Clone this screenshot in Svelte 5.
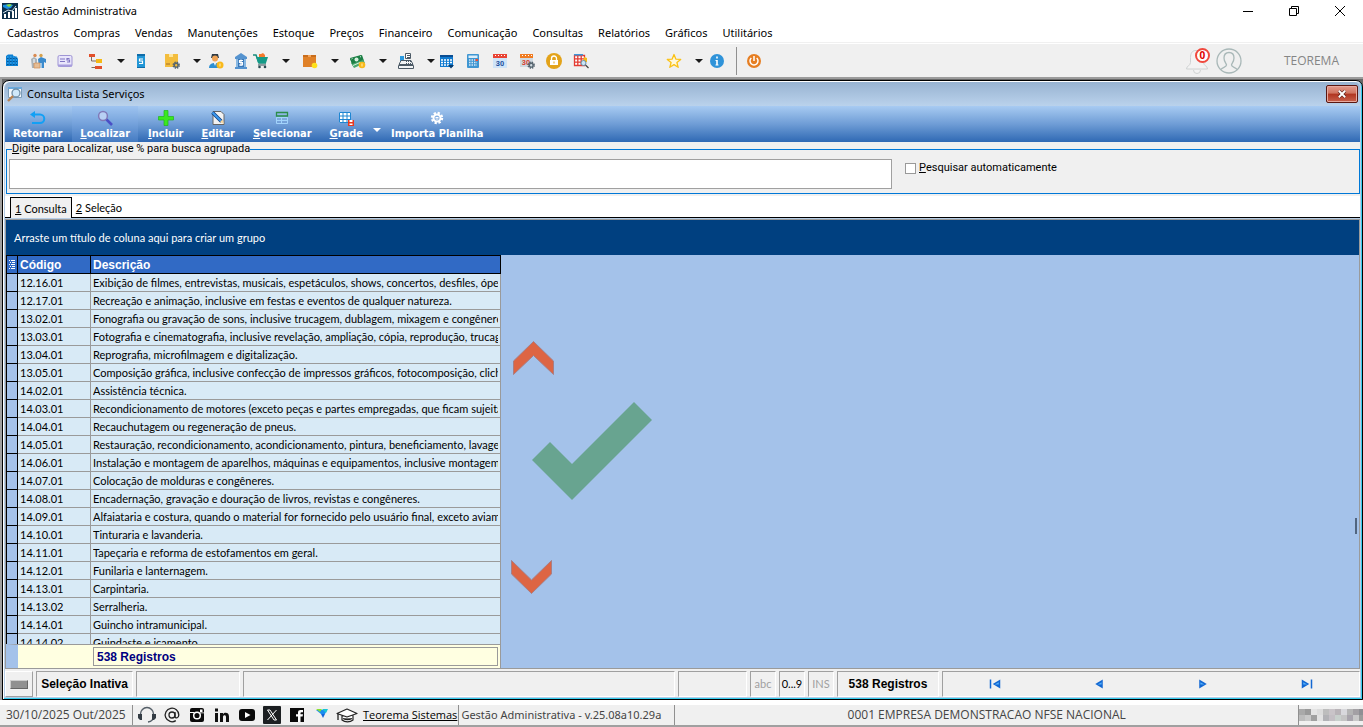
<script lang="ts">
  const menus = [
    "Cadastros",
    "Compras",
    "Vendas",
    "Manutenções",
    "Estoque",
    "Preços",
    "Financeiro",
    "Comunicação",
    "Consultas",
    "Relatórios",
    "Gráficos",
    "Utilitários",
  ];

  // main toolbar, width is the room each button takes
  const tools = [
    { icon: "building", label: "Empresas", width: 26, drop: false },
    { icon: "people", label: "Clientes", width: 27, drop: false },
    { icon: "card", label: "Cartões", width: 31, drop: false },
    { icon: "tree", label: "Plano de contas", width: 45, drop: true },
    { icon: "service", label: "Serviços", width: 31, drop: false },
    { icon: "boxGear", label: "Produtos", width: 44, drop: true },
    { icon: "userCoin", label: "Vendedores", width: 25, drop: false },
    { icon: "bank", label: "Bancos", width: 20, drop: false },
    { icon: "cart", label: "Pedidos", width: 49, drop: true },
    { icon: "box", label: "Estoque", width: 48, drop: true },
    { icon: "cash", label: "Contas", width: 48, drop: true },
    { icon: "register", label: "Caixa", width: 41, drop: true },
    { icon: "calendar", label: "Agenda", width: 26, drop: false },
    { icon: "calculator", label: "Calculadora", width: 27, drop: false },
    { icon: "day", label: "Data", width: 27, drop: false },
    { icon: "dayGear", label: "Vencimentos", width: 27, drop: false },
    { icon: "lock", label: "Bloquear", width: 27, drop: false },
    { icon: "gridSearch", label: "Consultar", width: 27, drop: false },
  ];

  const actions = [
    { icon: "back", key: "", text: "Retornar" },
    { icon: "search", key: "L", text: "ocalizar" },
    { icon: "plus", key: "I", text: "ncluir" },
    { icon: "edit", key: "E", text: "ditar" },
    { icon: "select", key: "S", text: "elecionar" },
    { icon: "gridSave", key: "G", text: "rade" },
    { icon: "gear", key: "", text: "Importa Planilha" },
  ];

  const rows = [
    ["12.16.01", "Exibição de filmes, entrevistas, musicais, espetáculos, shows, concertos, desfiles, óperas"],
    ["12.17.01", "Recreação e animação, inclusive em festas e eventos de qualquer natureza."],
    ["13.02.01", "Fonografia ou gravação de sons, inclusive trucagem, dublagem, mixagem e congêneres."],
    ["13.03.01", "Fotografia e cinematografia, inclusive revelação, ampliação, cópia, reprodução, trucagem"],
    ["13.04.01", "Reprografia, microfilmagem e digitalização."],
    ["13.05.01", "Composição gráfica, inclusive confecção de impressos gráficos, fotocomposição, clicheria"],
    ["14.02.01", "Assistência técnica."],
    ["14.03.01", "Recondicionamento de motores (exceto peças e partes empregadas, que ficam sujeitas"],
    ["14.04.01", "Recauchutagem ou regeneração de pneus."],
    ["14.05.01", "Restauração, recondicionamento, acondicionamento, pintura, beneficiamento, lavagem"],
    ["14.06.01", "Instalação e montagem de aparelhos, máquinas e equipamentos, inclusive montagem"],
    ["14.07.01", "Colocação de molduras e congêneres."],
    ["14.08.01", "Encadernação, gravação e douração de livros, revistas e congêneres."],
    ["14.09.01", "Alfaiataria e costura, quando o material for fornecido pelo usuário final, exceto aviamento."],
    ["14.10.01", "Tinturaria e lavanderia."],
    ["14.11.01", "Tapeçaria e reforma de estofamentos em geral."],
    ["14.12.01", "Funilaria e lanternagem."],
    ["14.13.01", "Carpintaria."],
    ["14.13.02", "Serralheria."],
    ["14.14.01", "Guincho intramunicipal."],
    ["14.14.02", "Guindaste e içamento."],
  ];

  const navs = [
    { icon: "first", label: "Primeiro" },
    { icon: "prev", label: "Anterior" },
    { icon: "next", label: "Próximo" },
    { icon: "last", label: "Último" },
  ];

  const links = [
    { icon: "headset", label: "Suporte" },
    { icon: "mail", label: "E-mail" },
    { icon: "instagram", label: "Instagram" },
    { icon: "linkedin", label: "LinkedIn" },
    { icon: "youtube", label: "YouTube" },
    { icon: "x", label: "X" },
    { icon: "facebook", label: "Facebook" },
    { icon: "teorema", label: "Site" },
    { icon: "school", label: "Treinamento" },
  ];

  // greys of the masked user name, two lines of squares
  const mask = [
    ["#a9a9a9", "#9a9a9a", "#e4e4e4", "#dcdcdc", "#bdbdbd", "#c9c4c8", "#b9b4b8", "#d8d8dc", "#b4b4b4", "#a3a0a4", "#8f8f94"],
    ["#bcbcbc", "#c8c8c8", "#a0a0a0", "#e2e2e2", "#b2b2b6", "#c4bfc4", "#c8d0cc", "#c4c4c4", "#a8a4ac", "#c8c8c8", "#9c9c9c"],
  ];

  const gearTeeth =
    '<circle cx="8" cy="8" r="5" fill="none" stroke="#fff" stroke-width="2.4" stroke-dasharray="2.2 1.73"/><circle cx="8" cy="8" r="3.5" fill="none" stroke="#fff" stroke-width="2"/>';
  const smallGear =
    '<circle cx="12.2" cy="12.2" r="2.9" fill="none" stroke="#56656f" stroke-width="1.6" stroke-dasharray="1.4 .9"/><circle cx="12.2" cy="12.2" r="1.9" fill="none" stroke="#56656f" stroke-width="1.4"/>';

  const icons: Record<string, string> = {
    app: '<path fill="#0d2f4a" d="M0 0h16v16H0z"/><path fill="#1c8fe0" d="M1 2l6-1 4 1-2 3-4 1-4-2z"/><path fill="#8ddc3c" d="M4 2l4-1 2 1-3 2z"/><path fill="#fff" d="M2 11h2v4H2zM6 9h2v6H6zM10 8h2v7h-2zM13 5h2v10h-2z"/><path stroke="#d4e6f2" fill="none" d="M1 10l5-3 4 1 4-5"/>',
    window: '<path fill="#f5fafe" stroke="#7c9cb8" d="M1.5 1.5h13v10h-13z"/><path fill="#6aa9dc" d="M1 1h14v2H1z"/><circle cx="9" cy="7" r="4" fill="#cfe8fa" stroke="#6f8da6" stroke-width="1.3"/><path stroke="#b98251" stroke-width="2.4" d="M6 10l-5 5"/>',
    building: '<path fill="#0b7fd2" d="M2 3l2-1.5h5v1l4 1.5 1 2v7H2z"/><path stroke="#075796" stroke-dasharray="1.5 1.5" d="M3 5.5h10M3 8.5h10M3 11.5h10"/><path stroke="#45aef0" stroke-dasharray="1.5 1.5" d="M3 4h10M3 7h10M3 10h10"/>',
    people: '<circle cx="5" cy="2.5" r="1.7" fill="#d98b52"/><path fill="#aab3ba" d="M1 6l3-2 3 2v9H2z"/><circle cx="11" cy="2.5" r="1.7" fill="#d7a14c"/><path fill="#3b8bcd" d="M8 6l3-2 5 2v4l-2-1v6H9z"/><path fill="#e5bd96" stroke="#cf8e55" stroke-width=".7" d="M4 10h6v5H4z"/><path stroke="#fff" d="M11 10v5M4 6v4"/>',
    card: '<rect x="1" y="2.5" width="14" height="11" rx="1.5" fill="#e9e6fb" stroke="#9f95d4"/><path fill="#a79ddd" d="M1 11.5h14v2H1z"/><path fill="none" stroke="#8075c3" stroke-width="1.2" d="M3 6h5M3 8.5h5M12.500 5.500H10v1.5h2.500v2H10"/>',
    tree: '<path fill="#e2502b" d="M1 1h6v3H1zM7 13h7v3H7z"/><path fill="#f5b915" d="M8 6h6v4H8z"/><path fill="none" stroke="#806a5c" d="M3.500 4v4H8M3.500 14.500H7"/>',
    service: '<path fill="#2196d6" d="M4 1h8v14H4z"/><path fill="#0f6ca8" d="M4 1h8v2H4zM4 14h8v1H4z"/><path fill="none" stroke="#fff" stroke-width="1.2" d="M10 6H6.500v2h3v2.500H6"/>',
    boxGear: '<path fill="#f3bd3d" d="M1 1h13v13H1z"/><path fill="#ffe59b" d="M5 1h4v3H5z"/><path stroke="#a06e2c" d="M2 11h4"/>' + smallGear,
    userCoin: '<path fill="#2e3a44" d="M4 1h6l1 4H3z"/><circle cx="7" cy="5.500" r="3" fill="#eea356"/><path fill="#2b8fd3" d="M1 15c0-4 3-5 6-5s5 1 6 5z"/><path fill="#fff" d="M6 10h2l-1 3z"/><circle cx="12" cy="12" r="3.500" fill="#f9b91b"/><path stroke="#fff2b8" d="M12 10.500v3"/>',
    bank: '<path fill="#5593cf" d="M8 0l6 4v2H2V4zM2 14h12v2H2z"/><path fill="#8ab9e3" d="M3 6h10v8H3z"/><path fill="#3777b9" d="M5 6h6v8H5z"/><path fill="none" stroke="#fff" stroke-width="1.2" d="M10 7.500H6.500v2h3v2.500H6M8 6.500v6.500"/>',
    cart: '<path fill="none" stroke="#178c7c" stroke-width="1.5" d="M0 2h3l3 8h7"/><path fill="#159b88" d="M3 4h12l-2 6H5z"/><path fill="#f47a2c" d="M6 1h2l2-1 2 2v2H6z"/><path fill="none" stroke="#2b4b52" d="M5 12h8"/><circle cx="6.500" cy="14" r="1.300" fill="#2b4b52"/><circle cx="12" cy="14" r="1.300" fill="#2b4b52"/>',
    box: '<path fill="#e08128" d="M1 2h13v12H1z"/><path fill="#c96d1c" d="M1 2h13v2H1z"/><path fill="#f6a65c" d="M6 2h3v2H6z"/><circle cx="12.500" cy="12.500" r="2.800" fill="#ffe01b"/>',
    cash: '<path fill="#1d8046" d="M0 6l12-4 2 6-11 5z"/><path fill="#4aa86f" d="M1 10l12-4 2 4-11 5z"/><path fill="#1d8046" d="M0 5l11-3 2 5-11 4z"/><circle cx="6.500" cy="6.500" r="2" fill="#d7f0df"/><path stroke="#d7f0df" d="M1.500 6l1-.5M10 4l1-.5M3 12.500l7-3"/><circle cx="12" cy="12" r="3.300" fill="#f9b91b"/><path stroke="#fff2b8" d="M12 10.500v3"/>',
    register: '<path fill="#fff" stroke="#4c5a66" d="M7.500.500h5v5h-5z"/><path stroke="#4c5a66" d="M9 2.500h3M9 4.500h3"/><path fill="#2b9ae0" d="M2 3h4v5H2z"/><path fill="#f3f5f6" stroke="#4c5a66" d="M3 7.500h10l2 4H1zM.500 12.500h15v3H.500z"/><path stroke="#4c5a66" stroke-dasharray="1 1" d="M8 8.500h5M8 10.500h6"/>',
    calendar: '<path fill="#0f7ad0" d="M1 2h13v12H1z"/><path stroke="#0a4d92" stroke-width="2" d="M1 3h13"/><path stroke="#fff" stroke-width="1.500" stroke-dasharray="2 1" d="M2 7h11M2 9.500h11M2 12h8"/><path fill="#063b6e" d="M9 12h6l-3 3.500z"/>',
    calculator: '<rect x="2" y="1" width="12" height="14" rx="1" fill="#3f96d2"/><path fill="#dceefa" d="M3.500 2.500h9v2.500h-9z"/><path stroke="#d3e8f6" stroke-width="1.500" stroke-dasharray="1.500 1" d="M4 7h8M4 9.500h8M4 12h8"/><path fill="#ee4b33" d="M10.500 6H13v2h-2.500z"/>',
    day: '<path fill="#cfe4f8" d="M1 2h14v13H1z"/><path fill="#e94435" d="M1 1h14v4H1z"/><path stroke="#fff" stroke-dasharray="1 2" d="M3 2.500h10"/><text x="8" y="12.500" text-anchor="middle" font-size="7.500" font-weight="bold" fill="#1b4f9c" font-family="Liberation Sans, sans-serif">30</text>',
    dayGear: '<path fill="#cfd9e0" d="M1 2h13v12H1z"/><path fill="#f07c22" d="M1 1h13v4H1z"/><path stroke="#fff" stroke-dasharray="1 2" d="M3 2.500h10"/><text x="7" y="12" text-anchor="middle" font-size="7.500" font-weight="bold" fill="#d9402c" font-family="Liberation Sans, sans-serif">30</text>' + smallGear,
    lock: '<circle cx="8" cy="8" r="8" fill="#e3a31a"/><path fill="#fff" d="M4 7h8v5H4z"/><path fill="none" stroke="#fff" stroke-width="1.300" d="M5.500 7V5.500a2.500 2.500 0 0 1 5 0V7"/><path fill="#e3a31a" d="M7.500 8.500h1v2h-1z"/>',
    gridSearch: '<path fill="#fff" stroke="#e33b32" stroke-width="1.300" d="M1.500 2.500h10v10h-10zM1.500 5.800h10M1.500 9.200h10M4.800 2.500v10M8.200 2.500v10"/><path fill="#3b97db" d="M1 1h9v1.500H1z"/><path fill="#f3b819" d="M11 4l3 1v4h-4z"/><circle cx="10.500" cy="10" r="2.500" fill="#c8e6fa" stroke="#6c8ca1"/><path stroke="#444" stroke-width="1.200" d="M12.500 12l3 3"/>',
    star: '<path fill="#fff8dc" stroke="#fbc216" stroke-width="1.300" stroke-linejoin="round" d="M8 1.500l1.800 4.600 4.900.3-3.800 3.100 1.300 4.800L8 11.600l-4.200 2.700 1.300-4.800L1.300 6.400l4.900-.3z"/>',
    info: '<circle cx="8" cy="8" r="7" fill="#2f93d9"/><path stroke="#fff" stroke-width="1.600" d="M8 7v5M8 3.500v2"/><path stroke="#fff" d="M6.500 12h3M6.500 7.500H8"/>',
    power: '<circle cx="8" cy="8" r="7" fill="#e67e22"/><path fill="none" stroke="#fff" stroke-width="1.500" d="M5.300 5a4 4 0 1 0 5.400 0M8 3v5"/>',
    back: '<path fill="none" stroke="#12a0f5" stroke-width="2" d="M2 4.500h8a4.200 4.200 0 0 1 0 8.500H2"/><path fill="#12a0f5" d="M5 1v7L0 4.500z"/>',
    search: '<circle cx="6" cy="6" r="4.400" fill="#b8d0f4" stroke="#8179b8" stroke-width="1.500"/><path stroke="#4a50c6" stroke-width="2.600" d="M9.500 9.500l5.500 5.500"/>',
    plus: '<path fill="#3be81f" stroke="#22b61d" stroke-width=".7" d="M6 .5h4V6.500h5.500v3.500H10v5.500H6V10H.500V6.500H6z"/>',
    edit: '<path fill="#f2f2f2" stroke="#666" d="M3 1.500h8l3 3v10H3z"/><path stroke="#123f80" stroke-width="3.600" d="M2.500 2.500l9 9"/><path stroke="#3b9af0" stroke-width="2" d="M2.500 2.500l8.500 8.500"/><path fill="#f7d59d" d="M10 12l2.500-2.500L14 14z"/>',
    select: '<path fill="none" stroke="#2a8d4a" stroke-width="1.300" d="M2.500 2.500h11v3.500h-11z"/><path fill="none" stroke="#a3d4fb" d="M2.500 7.500h11v6h-11zM7.500 7.500v6M2.500 10.500h11"/>',
    gridSave: '<path fill="#fff" d="M1 2h12v11H1z"/><path stroke="#1f86d2" fill="none" d="M1.500 2.500h11v10h-11zM5 2v11M9 2v11M1 6h12M1 9.500h12"/><path fill="#e8391f" d="M10 10h6v6h-6z"/><path fill="#fff" d="M11.500 10h3v2h-3zM11.500 13.500h3v1.500h-3z"/>',
    gear: gearTeeth + '<path stroke="#fff" stroke-width="1" d="M6.500 7.500h3M6.500 9h3"/>',
    first: '<path fill="#1267d2" d="M1 2h2v12H1zM15 2v12L5 8z"/><path fill="#55b0fb" d="M13 5.500v3H7.500z"/>',
    prev: '<path fill="#1267d2" d="M13 2v12L3 8z"/><path fill="#55b0fb" d="M11.500 5.500v3H6z"/>',
    next: '<path fill="#1267d2" d="M3 2v12l10-6z"/><path fill="#55b0fb" d="M4.500 5.500v3H10z"/>',
    last: '<path fill="#1267d2" d="M13 2h2v12h-2zM1 2v12l10-6z"/><path fill="#55b0fb" d="M3 5.500v3h5.500z"/>',
    headset: '<path fill="none" stroke="#555f68" stroke-width="1.400" d="M1.500 9V7a6.500 6.500 0 0 1 13 0v2c0 3-2 5.500-5.500 6"/><path fill="#333c44" d="M-1 7h4v6H1l-2-2zM13 7h4v4l-2 2h-2z"/>',
    mail: '<circle cx="8" cy="8" r="3" fill="none" stroke="#222" stroke-width="1.300"/><path fill="none" stroke="#222" stroke-width="1.300" d="M11 5v4.500c0 2 3.800 2 3.800-1.500a6.800 6.800 0 1 0-3 5.600"/>',
    instagram: '<rect x="1" y="1" width="14" height="14" rx="2" fill="#0a0a0a"/><circle cx="8" cy="8.500" r="3.300" fill="none" stroke="#fff" stroke-width="1.500"/><path fill="#fff" d="M11 2.500h2.500V5H11zM1 5h4v1H1zM11 5.500h4v.7h-4z"/>',
    linkedin: '<path fill="#111" d="M1 6h3v9H1zM1 1.500h3v3H1zM6 6h3v1.300C10.500 5 15 5.300 15 9.500V15h-3v-5c0-2.500-3-2.300-3 0v5H6z"/>',
    youtube: '<rect x="0" y="2" width="16" height="12" rx="3" fill="#0a0a0a"/><path fill="#fff" d="M6 5l5.500 3L6 11z"/>',
    x: '<rect x="-1" y="-1" width="18" height="18" rx="1" fill="#1c1f22"/><path fill="none" stroke="#fff" d="M3.500 3H6l6.500 10H10zM12.500 3l-9 10"/>',
    facebook: '<path fill="#0a0a0a" d="M1 1h14v14H1z"/><path fill="#fff" d="M9 15V9.500H7V7.300h2V5.500C9 3.800 10 3 11.500 3H14v2.200h-1.500c-.7 0-1 .3-1 .9v1.200H14l-.4 2.200h-2.100V15z"/>',
    teorema: '<path fill="#1a8df0" d="M2 3h11l-2 4H7z"/><path fill="#17c4d8" d="M8 2h6l-2 4z"/><path fill="#8adf32" d="M2 2h6L6 5z"/><path fill="#1464d8" d="M7 7h4l-2 4z"/>',
    school: '<path fill="#fff" stroke="#222" stroke-width="1.200" stroke-linejoin="round" d="M-2 6.500L8 2l10 4.500L8 10zM3 8.500V13c3 2.500 8 2.500 11 0V8.500"/><path stroke="#222" stroke-width="1.300" d="M-1 7v6M4 11.500c3 1.500 6 1.500 9 0"/>',
  };

  let search = "";
  let autoSearch = false;
  let tab = 1;
</script>

{#snippet icon(name: string)}
  <svg class="icon" viewBox="0 0 16 16" aria-hidden="true">{@html icons[name]}</svg>
{/snippet}

<div class="app">
  <header class="titlebar">
    {@render icon("app")}
    <span class="title">Gestão Administrativa</span>
    <div class="window-buttons">
      <button aria-label="Minimizar">
        <svg viewBox="0 0 12 12"><path d="M1 6.500h10" /></svg>
      </button>
      <button aria-label="Restaurar">
        <svg viewBox="0 0 12 12"><path d="M1.500 3.500h7v7h-7zM3.500 3V1.500h7v7H9" /></svg>
      </button>
      <button aria-label="Fechar">
        <svg viewBox="0 0 12 12"><path d="M1 1l10 10M11 1L1 11" /></svg>
      </button>
    </div>
  </header>

  <nav class="menu">
    {#each menus as menu}
      <button>{menu}</button>
    {/each}
  </nav>

  <div class="toolbar">
    {#each tools as tool}
      <button class="tool" style:width="{tool.width}px" aria-label={tool.label}>
        {@render icon(tool.icon)}
        {#if tool.drop}<span class="caret"></span>{/if}
      </button>
    {/each}
    <button class="tool favorite" aria-label="Favoritos">
      {@render icon("star")}
      <span class="caret"></span>
    </button>
    <button class="tool" aria-label="Informações">{@render icon("info")}</button>
    <span class="separator"></span>
    <button class="tool" aria-label="Sair">{@render icon("power")}</button>

    <div class="user">
      <button class="bell" aria-label="Notificações">
        <svg viewBox="0 0 26 26" aria-hidden="true">
          <path
            fill="#f3f3f3"
            stroke="#cfd2d2"
            d="M12 2.500c-4 0-5.500 3-5.500 7v5c0 3-4 3.500-4 6.500h21c0-3-4-3.500-4-6.500v-5c0-4-2.500-7-7.500-7zM9.500 22a3.500 3.500 0 0 0 7 0"
          />
        </svg>
        <span class="badge">0</span>
      </button>
      <svg class="avatar" viewBox="0 0 26 26" aria-hidden="true">
        <g fill="none" stroke="#a9b8b8" stroke-width="1.300">
          <circle cx="13" cy="13" r="12" />
          <path
            d="M5 21.500c1-2.500 5.500-2 5.500-4.500 0-1.500-2.500-3-2.500-7 0-3.500 2-5.500 5-5.500s5 2 5 5.500c0 4-2.500 5.500-2.500 7 0 2.500 4.500 2 5.500 4.500"
          />
        </g>
      </svg>
      <span class="user-name">TEOREMA</span>
    </div>
  </div>

  <div class="workspace">
    <main class="window">
      <div class="caption">
        {@render icon("window")}
        <h1>Consulta Lista Serviços</h1>
        <button class="close" aria-label="Fechar janela">
          <svg viewBox="0 0 12 10" aria-hidden="true">
            <path stroke="#5b1c16" stroke-width="4" d="M2 1l8 8M10 1L2 9" />
            <path stroke="#fff" stroke-width="2.400" d="M2 1l8 8M10 1L2 9" />
          </svg>
        </button>
      </div>

      <div class="actions">
        {#each actions as action}
          <button class="action" class:hot={action.icon === "search"}>
            {@render icon(action.icon)}
            <span>{#if action.key}<u>{action.key}</u>{/if}{action.text}</span>
          </button>
          {#if action.icon === "gridSave"}
            <button class="action-drop" aria-label="Opções da grade"><span class="caret light"></span></button>
          {/if}
        {/each}
      </div>

      <div class="filter">
        <fieldset>
          <legend><label for="search"><u>D</u>igite para Localizar, use % para busca agrupada</label></legend>
          <input id="search" type="text" bind:value={search} />
          <label class="auto">
            <input type="checkbox" bind:checked={autoSearch} />
            <span><u>P</u>esquisar automaticamente</span>
          </label>
        </fieldset>
      </div>

      <div class="tabs">
        <button class:active={tab === 1} on:click={() => (tab = 1)}><u>1</u> Consulta</button>
        <button class:active={tab === 2} on:click={() => (tab = 2)}><u>2</u> Seleção</button>
      </div>

      <section class="grid">
        <div class="group-band">Arraste um título de coluna aqui para criar um grupo</div>
        <div class="grid-body">
          <div class="grid-left">
            <div class="table-wrap">
              <table>
                <thead>
                  <tr>
                    <th class="mark">
                      <svg viewBox="0 0 7 10" aria-hidden="true">
                        <path stroke="#fff" d="M0 .5h1M2 .5h4M1 2.500h1M3 2.500h3M0 4.500h1M2 4.500h4M1 6.500h1M3 6.500h3M0 8.500h1M2 8.500h4" />
                      </svg>
                    </th>
                    <th class="code">Código</th>
                    <th>Descrição</th>
                  </tr>
                </thead>
                <tbody>
                  {#each rows as row}
                    <tr>
                      <td class="mark"></td>
                      <td>{row[0]}</td>
                      <td><div class="clip">{row[1]}</div></td>
                    </tr>
                  {/each}
                </tbody>
              </table>
            </div>
            <div class="summary"><span>538 Registros</span></div>
          </div>
          <div class="pick">
            <button class="up" aria-label="Subir">
              <svg viewBox="0 0 41 34"><path d="M.500 20L20.500.500l20 19.500v13.500L20.500 14.500.500 33.500z" /></svg>
            </button>
            <button class="check" aria-label="Selecionar registro">
              <svg viewBox="0 0 120 98"><path d="M0 58l18-18 22 22L102 0l18 18-80 80z" /></svg>
            </button>
            <button class="down" aria-label="Descer">
              <svg viewBox="0 0 41 34"><path d="M.500.500l20 19.500 20-19.500V14l-20 19.500L.500 14z" /></svg>
            </button>
          </div>
          <span class="thumb"></span>
        </div>
      </section>

      <footer class="status">
        <div class="panel key"><span class="lamp"></span></div>
        <div class="panel mode">Seleção Inativa</div>
        <div class="panel blank"></div>
        <div class="panel message"></div>
        <div class="panel spare"></div>
        <div class="panel flag off">abc</div>
        <div class="panel flag">0...9</div>
        <div class="panel flag off">INS</div>
        <div class="panel count">538 Registros</div>
        <div class="panel pager">
          {#each navs as nav}
            <button aria-label={nav.label}>{@render icon(nav.icon)}</button>
          {/each}
        </div>
      </footer>
    </main>
  </div>

  <footer class="bottom">
    <span class="date">30/10/2025 Out/2025</span>
    <div class="links">
      {#each links as link}
        <a href="#{link.icon}" aria-label={link.label}>{@render icon(link.icon)}</a>
      {/each}
    </div>
    <a class="site" href="#site">Teorema Sistemas</a>
    <span class="version">Gestão Administrativa - v.25.08a10.29a</span>
    <span class="company">0001 EMPRESA DEMONSTRACAO NFSE NACIONAL</span>
    <span class="masked">
      <svg viewBox="0 0 66 12" aria-hidden="true">
        {#each mask as line, y}
          {#each line as color, x}
            <rect x={x * 6} y={y * 6} width="6" height="6" fill={color} />
          {/each}
        {/each}
      </svg>
    </span>
  </footer>
</div>

<style>
  :global(body) {
    margin: 0;
    background: #f0f0f0;
  }

  .app {
    display: flex;
    flex-direction: column;
    height: 100vh;
    overflow: hidden;
    background: #fff;
    color: #000;
    font-family: "Noto Sans", "Open Sans", sans-serif;
    font-size: 11px;
    line-height: 16px;
  }

  button {
    padding: 0;
    border: none;
    background: none;
    color: inherit;
    font: inherit;
  }

  svg {
    display: block;
    overflow: visible;
  }

  .icon {
    width: 16px;
    height: 16px;
    flex: none;
  }

  .titlebar {
    display: flex;
    align-items: center;
    height: 22px;
    padding-left: 2px;
    flex: none;
  }

  .title {
    flex: 1;
    margin-left: 5px;
  }

  .window-buttons {
    display: flex;
  }

  .window-buttons button {
    display: flex;
    justify-content: center;
    width: 46px;
  }

  .window-buttons svg {
    width: 12px;
    height: 12px;
    fill: none;
    stroke: #000;
  }

  .menu {
    display: flex;
    gap: 15px;
    height: 21px;
    padding: 1px 7px 0;
    border-bottom: 1px solid #f0f0f0;
    align-items: center;
    flex: none;
    box-sizing: border-box;
  }

  .toolbar {
    display: flex;
    align-items: center;
    height: 33px;
    border-top: 1px solid #fff;
    background: #f0f0f0;
    flex: none;
  }

  .tool {
    display: flex;
    align-items: center;
    width: 27px;
    padding-left: 4px;
    gap: 13px;
    box-sizing: border-box;
    flex: none;
  }

  .caret {
    width: 0;
    height: 0;
    border: 4px solid transparent;
    border-top-color: #1a1a1a;
    border-bottom: none;
  }

  .caret.light {
    border-top-color: #fff;
  }

  .favorite {
    width: 43px;
    margin-left: 66px;
  }

  .separator {
    width: 1px;
    height: 28px;
    margin: 0 5px 0 4px;
    background: #909090;
  }

  .user {
    display: flex;
    align-items: center;
    margin-left: auto;
    padding-right: 24px;
  }

  .bell {
    position: relative;
  }

  .bell svg,
  .avatar {
    width: 26px;
    height: 26px;
  }

  .avatar {
    margin: 0 42px 0 6px;
  }

  .badge {
    position: absolute;
    top: 0;
    right: 0;
    width: 11px;
    border: 2px solid #f0493e;
    border-radius: 50%;
    background: #fff;
    color: #e00000;
    font-size: 10px;
    font-weight: bold;
    line-height: 11px;
    text-align: center;
  }

  .user-name {
    color: #858585;
    font-family: "Open Sans", sans-serif;
    font-size: 12px;
  }

  .workspace {
    display: flex;
    flex: 1;
    min-height: 0;
    border-top: 2px solid #9c9c9c;
    border-left: 2px solid #a0a0a0;
    background: #696969;
  }

  .window {
    display: flex;
    flex-direction: column;
    flex: 1;
    min-width: 0;
    margin-top: 1px;
    border: 1px solid #000;
    border-radius: 7px 7px 0 0;
    box-shadow:
      inset 1px 1px #fff,
      inset -1px -1px #35cdee;
    padding: 1px 2px 2px 2px;
    background: #b5cde6;
  }

  .caption {
    display: flex;
    align-items: center;
    height: 24px;
    padding: 0 2px;
    border-radius: 6px 6px 0 0;
    background: linear-gradient(#98b3d1, #bad2ec);
    flex: none;
  }

  h1 {
    flex: 1;
    margin: 0 0 0 4px;
    font-size: 11px;
    font-weight: normal;
  }

  .close {
    display: flex;
    align-items: center;
    justify-content: center;
    width: 32px;
    height: 18px;
    border: 1px solid #5a1711;
    border-radius: 2px;
    background: linear-gradient(#e39a8d, #d0745f 45%, #b03520 50%, #c8614c);
    box-shadow: inset 0 0 0 1px #e8a99e;
    box-sizing: border-box;
  }

  .close svg {
    width: 10px;
    height: 8px;
  }

  .actions {
    display: flex;
    gap: 2px;
    height: 36px;
    background: linear-gradient(#a8cbf2, #6f9dd6 50%, #2f69b4);
    color: #fff;
    font-family: "DejaVu Sans Condensed", "DejaVu Sans", sans-serif;
    font-weight: bold;
    flex: none;
  }

  .action {
    display: flex;
    flex-direction: column;
    align-items: center;
    padding: 4px 8px 0;
    white-space: nowrap;
  }

  .action.hot {
    background: rgba(130, 175, 235, 0.25);
  }

  .action-drop {
    display: flex;
    align-items: flex-end;
    padding-bottom: 10px;
  }

  .filter {
    padding: 0 0 2px 1px;
    background: #f0f0f0;
    font-family: Roboto, "Liberation Sans", sans-serif;
    flex: none;
  }

  fieldset {
    display: flex;
    align-items: flex-start;
    min-width: 0;
    height: 52px;
    margin: 0;
    padding: 3px 2px 0;
    border: 1px solid #0078d7;
    box-sizing: border-box;
  }

  legend {
    margin-left: 3px;
    padding: 0;
    line-height: 14px;
  }

  fieldset input[type="text"] {
    flex: 1;
    min-width: 0;
    height: 30px;
    border: 1px solid #a0a0a0;
    background: #fff;
    box-sizing: border-box;
  }

  .auto {
    display: flex;
    align-items: center;
    gap: 3px;
    width: 452px;
    margin: 1px 0 0 13px;
  }

  .auto input {
    appearance: none;
    width: 11px;
    height: 11px;
    margin: 0;
    border: 1px solid #999;
    background: #fff;
    box-sizing: border-box;
  }

  .auto input:checked {
    background: #0078d7;
  }

  .tabs {
    display: flex;
    height: 22px;
    padding-left: 5px;
    background:
      linear-gradient(#000, #000) 0 100% / 100% 1px no-repeat,
      #fff;
    font-family: Lato, "Liberation Sans", sans-serif;
    flex: none;
  }

  .tabs button {
    padding: 2px 4px 0;
  }

  .tabs button.active {
    margin-top: 1px;
    padding-top: 1px;
    border: 1px solid #000;
    border-bottom: none;
    background: #f0f0f0;
  }

  .grid {
    display: flex;
    flex-direction: column;
    flex: 1;
    min-height: 0;
    margin-top: 1px;
    border: 1px solid #9a9a9a;
    background: #a4c2ea;
    font-family: Lato, "Liberation Sans", sans-serif;
  }

  .group-band {
    height: 35px;
    padding-left: 8px;
    background: #004080;
    color: #fff;
    line-height: 36px;
    flex: none;
  }

  .grid-body {
    display: flex;
    flex: 1;
    min-height: 0;
  }

  .grid-left {
    display: flex;
    flex-direction: column;
    width: 495px;
    flex: none;
  }

  .table-wrap {
    flex: 1;
    min-height: 0;
    overflow: hidden;
  }

  table {
    width: 100%;
    table-layout: fixed;
    border-spacing: 0;
  }

  th,
  td {
    height: 18px;
    padding: 1px 2px 0;
    border-right: 1px solid #9a9a9a;
    border-bottom: 1px solid #9a9a9a;
    background: #d8eaf6;
    line-height: 16px;
    text-align: left;
    white-space: nowrap;
    box-sizing: border-box;
  }

  th {
    height: 19px;
    border-top: 1px solid #000;
    border-color: #000;
    background: #316ac5;
    color: #fff;
    font-family: "Liberation Sans", sans-serif;
    font-size: 12px;
  }

  .mark {
    width: 12px;
    border-left: 1px solid #000;
    border-color: #000;
  }

  td.mark {
    background: #a4c2ea;
  }

  .mark svg {
    width: 7px;
    height: 10px;
  }

  .code {
    width: 73px;
  }

  .clip {
    overflow: hidden;
  }

  .summary {
    display: flex;
    height: 24px;
    padding: 2px 2px 2px 75px;
    border-top: 1px solid #9a9a9a;
    border-right: 1px solid #9a9a9a;
    border-left: 12px solid #a4c2ea;
    background: #ffffe1;
    box-sizing: border-box;
    flex: none;
  }

  .summary span {
    flex: 1;
    padding-left: 3px;
    border: 1px solid #9a9a9a;
    color: #000080;
    font-family: "Liberation Sans", sans-serif;
    font-size: 12px;
    font-weight: bold;
    line-height: 18px;
  }

  .pick {
    display: flex;
    flex-direction: column;
    align-items: flex-start;
    flex: 1;
    padding: 86px 0 0 10px;
  }

  .up,
  .down {
    width: 41px;
    fill: #dd6544;
    stroke: #a87e84;
  }

  .up {
    margin-left: 2px;
  }

  .check {
    width: 120px;
    margin: 27px 0 60px 21px;
    fill: #68a490;
  }

  .thumb {
    align-self: flex-end;
    width: 2px;
    height: 16px;
    margin: 0 2px 134px 0;
    background: #51657f;
  }

  .status {
    display: flex;
    gap: 3px;
    padding-top: 2px;
    background: #f0f0f0;
    font-family: Lato, "Liberation Sans", sans-serif;
    flex: none;
  }

  .panel {
    height: 26px;
    border: 1px solid;
    border-color: #a0a0a0 #fff #fff #a0a0a0;
    line-height: 24px;
    text-align: center;
    white-space: nowrap;
    box-sizing: border-box;
  }

  .key {
    display: flex;
    align-items: center;
    justify-content: center;
    width: 28px;
    border-color: #fff #a0a0a0 #a0a0a0 #fff;
  }

  .lamp {
    width: 16px;
    height: 7px;
    border: 1px solid;
    border-color: #ccc #666 #666 #ccc;
    background: #909090;
  }

  .mode,
  .count {
    width: 97px;
    font-family: "Liberation Sans", sans-serif;
    font-size: 12px;
    font-weight: bold;
  }

  .blank {
    width: 104px;
  }

  .message {
    flex: 432;
  }

  .spare {
    width: 69px;
  }

  .flag {
    width: 26px;
  }

  .off {
    color: #a0a0a0;
  }

  .count {
    width: 102px;
  }

  .pager {
    display: grid;
    grid-template-columns: repeat(4, 1fr);
    flex: 418;
  }

  .pager button {
    display: flex;
    align-items: center;
    justify-content: center;
  }

  .pager .icon {
    width: 12px;
    height: 12px;
  }

  .bottom {
    display: flex;
    align-items: stretch;
    height: 27px;
    padding: 5px 0 0 2px;
    border-bottom: 2px solid #a0a0a0;
    background: linear-gradient(#fff 5px, #f0f0f0 5px);
    color: #444;
    line-height: 20px;
    white-space: nowrap;
    box-sizing: border-box;
    flex: none;
  }

  .date {
    width: 131px;
    padding-left: 4px;
    border-right: 1px solid #909090;
    font-family: "Open Sans", sans-serif;
    font-size: 12px;
    box-sizing: border-box;
  }

  .links {
    display: flex;
    padding-left: 1px;
  }

  .links a {
    display: flex;
    align-items: center;
    justify-content: center;
    width: 25px;
  }

  .site {
    padding: 0 1px 0 4px;
    border-right: 1px solid #909090;
    color: #000;
    font-family: "Open Sans", sans-serif;
  }

  .version {
    width: 216px;
    padding-left: 2px;
    border-right: 1px solid #909090;
    box-sizing: border-box;
  }

  .company {
    flex: 1;
    border-right: 1px solid #909090;
    font-family: "Open Sans", sans-serif;
    font-size: 12px;
    text-align: center;
  }

  .masked {
    display: flex;
    align-items: center;
    width: 64px;
    overflow: hidden;
  }

  .masked svg {
    width: 66px;
    height: 12px;
    flex: none;
  }
</style>
